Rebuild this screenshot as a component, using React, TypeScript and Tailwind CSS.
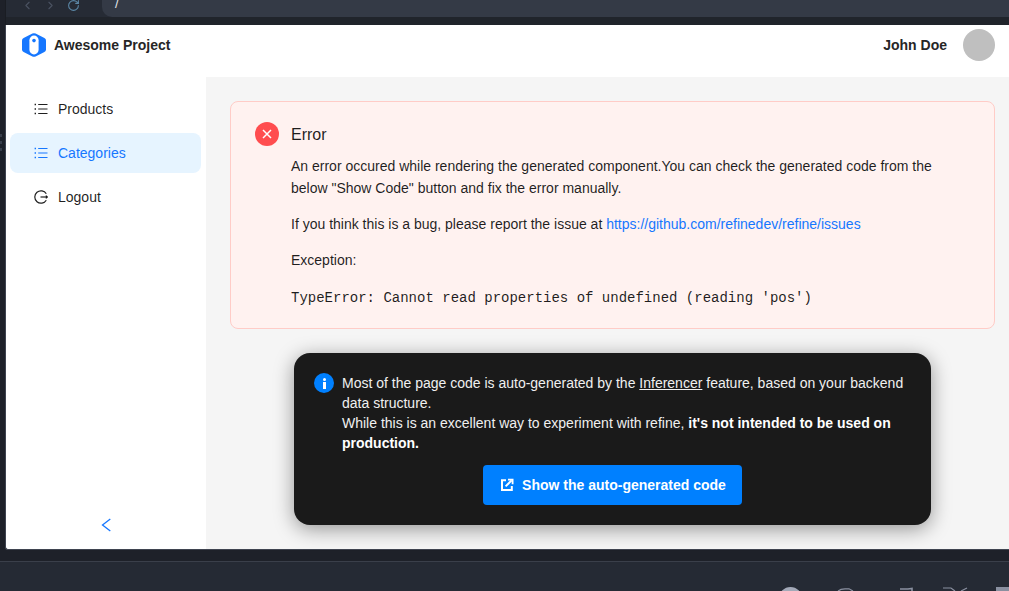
import React from "react";
import { ChevronLeft, ChevronRight, RotateCw } from "lucide-react";

const menuItems = [
  { label: "Products", active: false },
  { label: "Categories", active: true },
];

const LogoMark = () => (
  <svg width="24" height="24" viewBox="0 0 24 24">
    <path d="M10.4 0.5 Q12 -0.2 13.6 0.5 L22.4 5 Q24 5.9 24 7.6 V16.4 Q24 18.1 22.4 19 L13.6 23.5 Q12 24.2 10.4 23.5 L1.6 19 Q0 18.1 0 16.4 V7.6 Q0 5.9 1.6 5 Z" fill="#1677ff" />
    <rect x="7.4" y="2.6" width="9.2" height="18.8" rx="4.6" fill="#fff" />
    <circle cx="12" cy="7.6" r="1.8" fill="#1677ff" />
  </svg>
);

const ListIcon = () => (
  <svg width="14" height="14" viewBox="0 0 14 14" fill="none" stroke="currentColor" strokeWidth="1.1">
    <path d="M4.2 2.5 H13.5 M4.2 7 H13.5 M4.2 11.5 H13.5" />
    <path d="M0.6 2.5 H2 M0.6 7 H2 M0.6 11.5 H2" strokeWidth="1.4" />
  </svg>
);

const LogoutIcon = () => (
  <svg width="14" height="14" viewBox="0 0 14 14" fill="none" stroke="currentColor" strokeWidth="1.2">
    <path d="M12.3 3.8 A6.2 6.2 0 1 0 12.3 10.2" />
    <path d="M6.5 7 H13" />
    <path d="M11.8 5.6 L13.3 7 L11.8 8.4" />
  </svg>
);

const OpenIcon = () => (
  <svg width="14" height="14" viewBox="0 0 14 14" fill="none" stroke="currentColor" strokeWidth="2">
    <path d="M6 2.2 H2 V12 H11.8 V8" />
    <path d="M5.6 8.4 L11.6 2.4" />
    <path d="M8 1.6 H12.6 V6.2" strokeWidth="1.8" />
  </svg>
);

const App: React.FC = () => {
  return (
    <div className="h-[591px] w-[1009px] overflow-hidden flex flex-col bg-[#1e2129] font-['Liberation_Sans',Arial,sans-serif] text-[14px] text-[rgba(0,0,0,0.88)]">
      <div className="h-[550px] shrink-0 flex">
        {/* Drag handle strip */}
        <div className="w-[5px] shrink-0 flex flex-col items-start gap-[4px] pt-[134px]">
          <div className="w-[2px] h-[3px] bg-[#3a3f4a]" />
          <div className="w-[2px] h-[3px] bg-[#3a3f4a]" />
          <div className="w-[2px] h-[3px] bg-[#3a3f4a]" />
        </div>

        <div className="flex-1 min-w-0 flex flex-col">
          {/* Browser bar */}
          <div className="h-[25px] shrink-0 flex flex-col">
            <div className="h-[17px] shrink-0 flex bg-[#262b35] border-l border-[#1a1d23]">
              <div className="w-[96px] flex items-start pl-[15px] gap-[10px] -mt-[2px]">
                <ChevronLeft size={13} className="text-[#4a5261] mt-[1px]" />
                <ChevronRight size={13} className="text-[#4a5261] mt-[1px]" />
                <RotateCw size={13} className="text-[#5b87a6] mt-[1px]" />
              </div>
              <div className="flex-1 bg-[#343a46] rounded-bl-[10px] pl-[13px] text-[#e5e7eb] text-[13px] leading-[7px]">
                /
              </div>
            </div>
            <div className="flex-1 bg-[#20242b] border-l border-[#1a1d23]" />
          </div>

          {/* App window */}
          <div className="flex-1 min-h-0 bg-white flex flex-col border-l border-b border-[#3f4450] rounded-bl-[3px]">
            <header className="h-[52px] shrink-0 flex items-center justify-between pl-[16px] pr-[14px]">
              <div className="flex items-center gap-[8px] -mt-[12px]">
                <LogoMark />
                <span className="font-bold text-[14px] text-[#262626]">Awesome Project</span>
              </div>
              <div className="flex items-center gap-[16px] -mt-[12px]">
                <span className="font-bold text-[14px] text-[#262626]">John Doe</span>
                <div className="w-[32px] h-[32px] rounded-full bg-[#bfbfbf]" />
              </div>
            </header>

            <div className="flex-1 flex min-h-0">
              {/* Sidebar */}
              <aside className="w-[200px] shrink-0 flex flex-col pl-[4px] pr-[5px] pt-[12px]">
                <nav className="flex flex-col gap-[4px]">
                  {menuItems.map((item) => (
                    <div
                      key={item.label}
                      className={
                        item.active
                          ? "h-[40px] flex items-center gap-[10px] pl-[24px] rounded-[8px] bg-[#e6f4ff] text-[#1677ff]"
                          : "h-[40px] flex items-center gap-[10px] pl-[24px] rounded-[8px]"
                      }
                    >
                      <ListIcon />
                      <span>{item.label}</span>
                    </div>
                  ))}
                  <div className="h-[40px] flex items-center gap-[10px] pl-[24px]">
                    <LogoutIcon />
                    <span>Logout</span>
                  </div>
                </nav>
                <div className="mt-auto h-[48px] flex items-center justify-center text-[#1677ff]">
                  <svg width="10" height="14" viewBox="0 0 10 14" fill="none" stroke="currentColor" strokeWidth="1.3">
                    <path d="M9.3 1 L1.5 7 L9.3 13" />
                  </svg>
                </div>
              </aside>

              {/* Content */}
              <main className="flex-1 min-w-0 bg-[#f5f5f5] pl-[24px] pr-[14px] pt-[24px] flex flex-col">
                <div className="h-[228px] shrink-0 border border-[#ffccc7] bg-[#fff2f0] rounded-[8px] pt-[20px] pl-[24px] pr-[40px] flex gap-[12px]">
                  <div className="w-[24px] h-[24px] rounded-full bg-[#ff4d4f] flex items-center justify-center shrink-0 text-white">
                    <svg width="10" height="10" viewBox="0 0 10 10" stroke="currentColor" strokeWidth="1.5">
                      <path d="M1 1 L9 9 M9 1 L1 9" />
                    </svg>
                  </div>
                  <div className="flex-1">
                    <div className="text-[16px] leading-[24px] mt-[1px]">Error</div>
                    <p className="mt-[8px] leading-[22px]">
                      An error occured while rendering the generated component.You can check the generated code from the below "Show Code" button and fix the error manually.
                    </p>
                    <p className="mt-[14px] leading-[22px]">
                      If you think this is a bug, please report the issue at{" "}
                      <span className="text-[#1677ff]">https://github.com/refinedev/refine/issues</span>
                    </p>
                    <p className="mt-[14px] leading-[22px]">Exception:</p>
                    <p className="mt-[16px] leading-[22px] font-['Liberation_Mono',monospace]">
                      TypeError: Cannot read properties of undefined (reading 'pos')
                    </p>
                  </div>
                </div>

                {/* Inferencer notice */}
                <div className="mt-[24px] ml-[64px] w-[637px] h-[172px] shrink-0 bg-[#1a1a1a] rounded-[16px] shadow-[0_4px_20px_rgba(0,0,0,0.4)] pt-[20px] px-[20px] text-white">
                  <div className="flex gap-[8px]">
                    <div className="w-[20px] h-[20px] rounded-full bg-[#0080ff] flex flex-col items-center justify-center shrink-0 text-white">
                      <div className="w-[3px] h-[3px] rounded-full bg-white" />
                      <div className="w-[3px] h-[7px] bg-white mt-[1px]" />
                    </div>
                    <p className="leading-[20px] text-[#f0f0f0]">
                      Most of the page code is auto-generated by the <u>Inferencer</u> feature, based on your backend data structure.
                      <br />
                      While this is an excellent way to experiment with refine, <b className="text-white">it's not intended to be used on production.</b>
                    </p>
                  </div>
                  <div className="flex justify-center mt-[12px]">
                    <button className="h-[40px] w-[259px] bg-[#0080ff] rounded-[4px] pl-[1px] flex items-center justify-center gap-[8px] font-bold text-white">
                      <OpenIcon />
                      Show the auto-generated code
                    </button>
                  </div>
                </div>
              </main>
            </div>
          </div>
        </div>
      </div>

      {/* Bottom toolbar */}
      <div className="h-[11px] shrink-0" />
      <div className="flex-1 bg-[#252a34] border-t border-[#3a3f4a] pt-[25px] pl-[779px] flex items-start overflow-hidden text-[#8a90a0]">
        <div className="w-[23px] h-[23px] rounded-full bg-[#a3a9b8] shrink-0" />
        <svg width="207" height="4" viewBox="0 0 207 4" fill="none" stroke="currentColor" strokeWidth="1.2" className="shrink-0">
          <path d="M36 4 L39 2.4 L43 1.8 H47 L51 4" />
          <path d="M98 2 H106 L110 1.5 V4" strokeWidth="1.6" />
          <path d="M141 1 H149 L153 4 M159 4 L165 1" />
        </svg>
        <div className="w-[13px] h-[10px] bg-[#8a90a0] shrink-0 -ml-[13px]" />
      </div>
    </div>
  );
};

export default App;
